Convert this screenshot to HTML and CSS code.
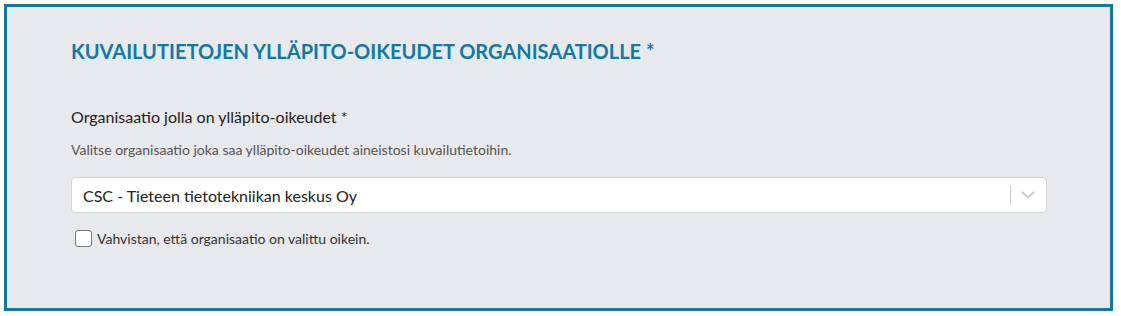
FILE: index.html
```html
<!DOCTYPE html>
<html lang="fi">
<head>
<meta charset="utf-8">
<link rel="stylesheet" href="styles.css">
</head>
<body>
<section class="panel">
  <h2 class="title">KUVAILUTIETOJEN YLLÄPITO-OIKEUDET ORGANISAATIOLLE *</h2>
  <div class="field">
    <label class="label">Organisaatio jolla on ylläpito-oikeudet *</label>
    <p class="help">Valitse organisaatio joka saa ylläpito-oikeudet aineistosi kuvailutietoihin.</p>
    <div class="select">
      <span class="value">CSC - Tieteen tietotekniikan keskus Oy</span>
      <span class="indicators">
        <span class="sep"></span>
        <svg class="chev" width="20" height="20" viewBox="0 0 20 20"><path d="M4.5 7.5 L10 12.5 L15.5 7.5" fill="none" stroke="#cccccc" stroke-width="2" stroke-linecap="round" stroke-linejoin="round"/></svg>
      </span>
    </div>
    <label class="check">
      <span class="box"></span>
      <span class="check-text">Vahvistan, että organisaatio on valittu oikein.</span>
    </label>
  </div>
</section>
</body>
</html>
```
FILE: styles.css
```css
* { box-sizing: border-box; }
html, body { margin: 0; padding: 0; background: #ffffff; }
body { padding: 4px 8px 5px 4px; font-family: Lato, "Open Sans", sans-serif; }
.panel {
  border: 3px solid #0f7ba5;
  background: #e8e9ec;
  height: 307px;
  padding: 31px 63px 0 64px;
}
.title {
  margin: 0;
  font-size: 20px;
  font-weight: 700;
  color: #0f7ba5;
  line-height: 26px;
}
.field { margin-top: 43px; }
.label {
  display: block;
  font-size: 16px;
  color: #222;
  line-height: 20px;
}
.help {
  margin: 14px 0 0;
  font-size: 14px;
  color: #555;
  line-height: 18px;
}
.select {
  margin-top: 18px;
  width: 976px;
  height: 36px;
  background: #fff;
  border: 1px solid #d4d4d4;
  border-radius: 4px;
  display: flex;
  align-items: center;
  padding-left: 11px;
}
.value { flex: 1; font-size: 16px; color: #222; }
.indicators { display: flex; align-items: center; height: 100%; }
.sep { width: 1px; height: 20px; background: #cccccc; }
.chev { margin: 0 8px 0 7px; }
.check {
  margin-top: 17px;
  margin-left: 4px;
  display: flex;
  align-items: center;
}
.box {
  width: 17px;
  height: 17px;
  background: #fff;
  border: 1px solid #767676;
  border-radius: 3px;
}
.check-text { margin-left: 5px; font-size: 14px; color: #333; }
```
